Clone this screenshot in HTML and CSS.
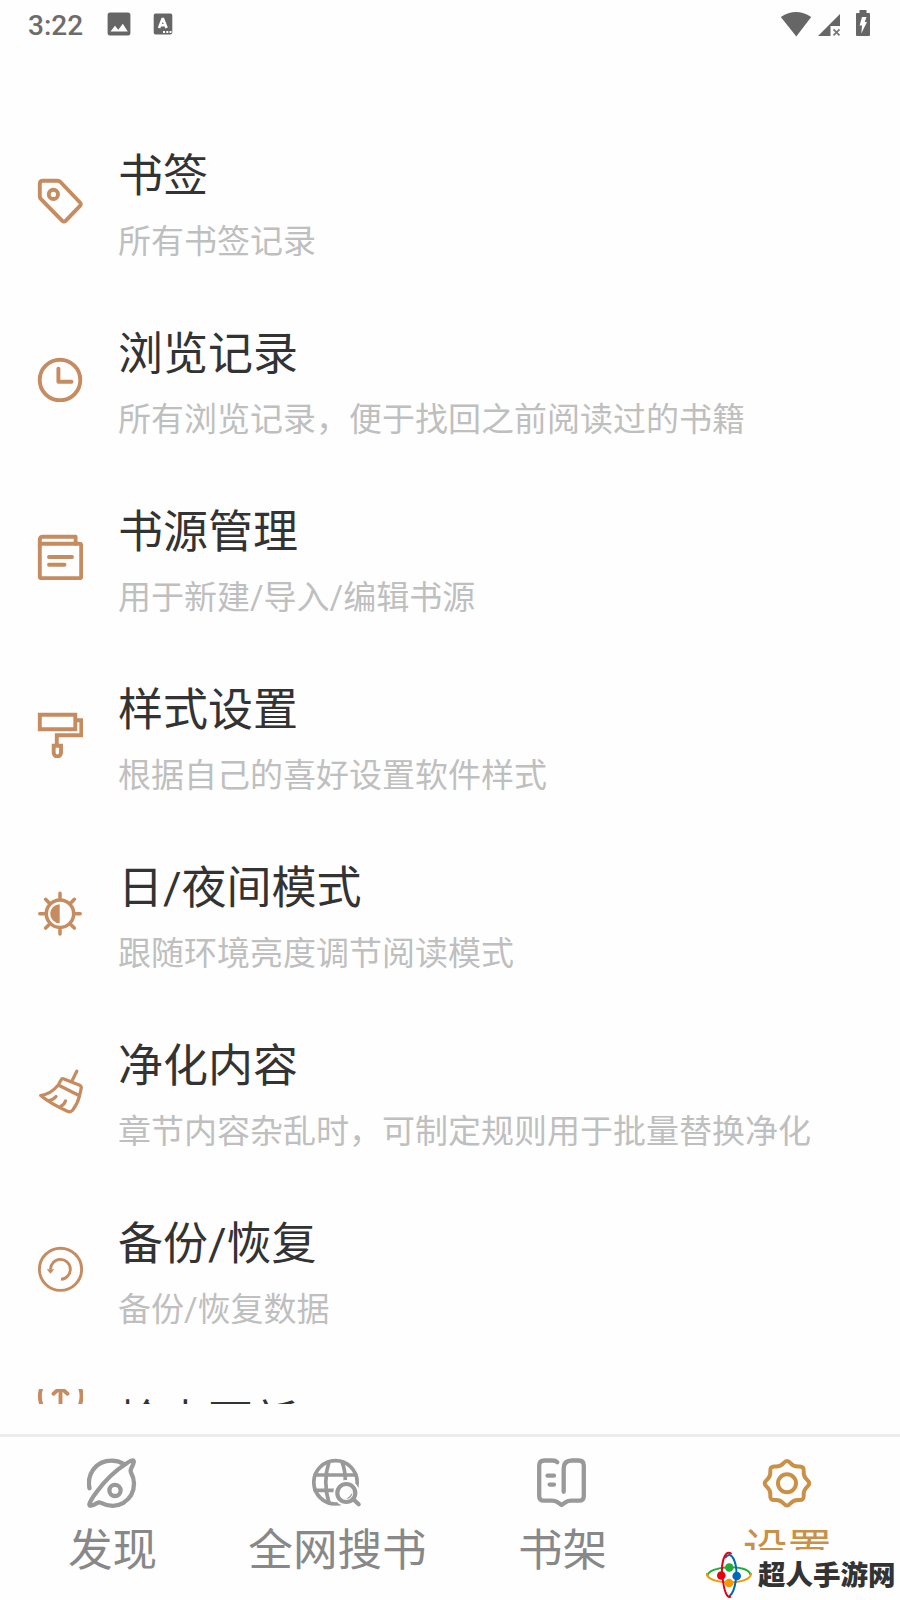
FILE: index.html
```html
<!DOCTYPE html>
<html lang="zh-CN">
<head>
	<meta charset="UTF-8">
	<meta name="viewport" content="width=device-width, initial-scale=1.0">
	<title>设置</title>
	<link rel="stylesheet" href="styles.css">
</head>
<body>
	<div class="status">
		<span class="time">3:22</span>
		<svg class="photo" width="24" height="24" viewBox="0 0 24 24">
			<rect x=".6" y=".6" width="22.8" height="22.8" rx="2.5"/>
			<path class="cut" d="M3.500 19.500l4.500-5.800 3.300 4 4.500-6 5 7.800z"/>
		</svg>
		<svg class="lang" width="20" height="22" viewBox="0 0 20 22">
			<rect x=".7" y=".5" width="18.6" height="21" rx="2"/>
			<path class="cut-line" d="M6 15l3.500-9h.6l3.500 9M7.300 12.300h5"/>
			<path class="cut" d="M10 18h2v2h-2zM13.300 18h2v2h-2zM16.500 18h2v2h-2z"/>
		</svg>
		<div class="signals">
			<svg width="32" height="26" viewBox="0 0 32 26"><path d="M.8 6Q16-4.200 31.200 6L16.300 25.500z"/></svg>
			<svg class="cell" width="24" height="24" viewBox="0 0 24 24">
				<path d="M23 1v12h-9.500v10H1z"/>
				<path class="cross" d="M16.500 16.300l6 6M22.500 16.300l-6 6"/>
			</svg>
			<svg class="battery" width="14" height="26" viewBox="0 0 14 26">
				<path d="M3.500 0h7v3H13q1 0 1 1v21q0 1-1 1H1q-1 0-1-1V4q0-1 1-1h2.500z"/>
				<path class="cut" d="M6 7h4.500L8.800 12H11L5.300 23.500 6 15.500H3.600z"/>
			</svg>
		</div>
	</div>

	<div class="list">
		<div class="item">
			<svg class="icon" viewBox="0 0 46 46">
				<path d="M6 2.800h14.500q1.800 0 3 1.200L43 24.500q1.700 1.800 0 3.400L28.600 42.800q-1.700 1.700-3.300 0L4 21.200q-1.200-1.200-1.200-3V6q0-3.200 3.200-3.200z"/>
				<circle cx="16.400" cy="16.400" r="4.600"/>
			</svg>
			<div>
				<h2>书签</h2>
				<p>所有书签记录</p>
			</div>
		</div>
		<div class="item">
			<svg class="icon" viewBox="0 0 46 46">
				<circle cx="23" cy="24" r="20.300"/>
				<path d="M21.400 12.600v13.100h13.100"/>
			</svg>
			<div>
				<h2>浏览记录</h2>
				<p>所有浏览记录，便于找回之前阅读过的书籍</p>
			</div>
		</div>
		<div class="item">
			<svg class="icon" viewBox="0 0 46 46">
				<rect x="2.800" y="9.700" width="41.400" height="34.500" rx="1.500"/>
				<path d="M2.800 12V6q0-3.200 3.200-3.200h32.600v6.900M12 23h23M12 30.700h15.500"/>
			</svg>
			<div>
				<h2>书源管理</h2>
				<p>用于新建/导入/编辑书源</p>
			</div>
		</div>
		<div class="item">
			<svg class="icon sharp" viewBox="0 0 46 46">
				<path d="M2.800 2.800h35.500v14.500H2.800zM40 8.300h4.300v15H19.800V33M16.700 33.800h7.300v7a3.650 3.650 0 0 1-7.300 0z"/>
			</svg>
			<div>
				<h2>样式设置</h2>
				<p>根据自己的喜好设置软件样式</p>
			</div>
		</div>
		<div class="item">
			<svg class="icon sun" viewBox="0 0 46 46">
				<circle cx="23" cy="23.700" r="13.700"/>
				<path d="M23 8V3.300M23 39.500v4.600M7.500 23.700H2.800M38.500 23.700h4.700M12 12.700L8.600 9.300M34 12.700l3.400-3.400M12 34.700l-3.400 3.400M34 34.700l3.400 3.400"/>
				<path class="fill" d="M22.700 14.300a9.500 9.500 0 0 0 0 19z"/>
			</svg>
			<div>
				<h2>日/夜间模式</h2>
				<p>跟随环境亮度调节阅读模式</p>
			</div>
		</div>
		<div class="item">
			<svg class="icon broom" viewBox="0 0 46 46">
				<path d="M39.800 3.200L35.200 12.500M21.300 17l2.700-5q1-2 3-1l15.700 6.300q2 .8 1.500 3L42.500 28q-2 8-7 14.300-2 2.300-5 1Q14 36 3.700 27.500 14 26 21.300 17zM21.300 17L42 27.500M11.700 32.500q4.500-.5 7.300-4M23.500 38.500q3.500-1.500 5-5.500"/>
			</svg>
			<div>
				<h2>净化内容</h2>
				<p>章节内容杂乱时，可制定规则用于批量替换净化</p>
			</div>
		</div>
		<div class="item">
			<svg class="icon thin" viewBox="0 0 46 46">
				<circle cx="23.500" cy="23.300" r="21.100"/>
				<path d="M24 33.200A9.900 9.900 0 1 0 13.500 23.500"/>
				<path class="fill" d="M9.800 23.300h7.500l-3.900 4.400z"/>
			</svg>
			<div>
				<h2>备份/恢复</h2>
				<p>备份/恢复数据</p>
			</div>
		</div>
		<div class="item last">
			<svg class="icon" viewBox="0 0 46 15">
				<path d="M4.300-1Q1.300 7.500 4.500 16M43.100-1q3 8.500-.2 17M23.500 0v17M16.500 4.800l7-6.300 7 6.300"/>
			</svg>
			<div>
				<h2>检查更新</h2>
			</div>
		</div>
	</div>

	<div class="nav">
		<div class="tab">
			<svg viewBox="0 0 50 50">
				<path d="M2.500 30.200C-.5 16 9 2.600 24.700 2.600q6.300 0 12 3.200M38 6.500Q23 16 10 33.500 3.500 42 2.400 46q-.3 2 1.600 1.600 3-.6 6-2.500 2-1.300 4-.3 12 6 22.500 0Q47 38 47 25.500q0-5.500-3-11-.8-1.800.2-4 2.200-4 2.600-6.500.2-2-1.800-1.500Q42.500 3 38 6.500z"/>
				<circle cx="28" cy="32.400" r="5.600"/>
			</svg>
			<span>发现</span>
		</div>
		<div class="tab">
			<svg class="globe" viewBox="0 0 50 50">
				<circle cx="23.500" cy="24.300" r="21.700"/>
				<path d="M3 17h41M3 32.300h22M17 4q-6.500 20 0 41M30 4q3.500 8.500 3.300 20"/>
				<circle class="halo" cx="34.300" cy="35" r="9.500"/>
				<circle class="lens" cx="34.300" cy="35" r="9"/>
				<path class="lens" d="M41 41l5.700 5.300"/>
			</svg>
			<span>全网搜书</span>
		</div>
		<div class="tab">
			<svg viewBox="0 0 50 50">
				<path d="M20.300 4.300Q18.500 2.500 15.500 2.500H7.500Q2.200 2.500 2.200 7.500V38q0 4.700 4.800 4.700h7.500q4 0 6.500 1.800l3.600 2.500 3.600-2.500q2.500-1.800 6.500-1.800H42q4.800 0 4.800-4.700V7.500q0-5-5.300-5h-6.500q-8.300 0-8.300 8v23.300M10.500 17.700h6.500M12.600 26.600H17"/>
			</svg>
			<span>书架</span>
		</div>
		<div class="tab active">
			<svg viewBox="-25 -25.300 50 50">
				<circle cx="0" cy="0" r="9"/>
				<path d="M20.280 3.370Q16.260 6.730 16.730 11.970Q17.200 17.200 11.970 16.730Q6.730 16.260 3.370 20.280Q0 24.300-3.370 20.280Q-6.730 16.260-11.970 16.730Q-17.200 17.200-16.730 11.970Q-16.260 6.730-20.280 3.370Q-24.300 0-20.280-3.370Q-16.260-6.730-16.730-11.970Q-17.200-17.200-11.970-16.730Q-6.730-16.260-3.370-20.280Q0-24.300 3.370-20.280Q6.730-16.260 11.970-16.730Q17.200-17.200 16.730-11.970Q16.260-6.730 20.280-3.370Q24.300 0 20.280 3.370z"/>
			</svg>
			<span>设置</span>
		</div>
	</div>

	<div class="mark">
		<svg width="46" height="48" viewBox="0 0 46 48">
			<g class="orbit">
				<path class="green" d="M1.500 25C1 15 43 12 44.500 24"/>
				<path class="orange" d="M1 22C-1 34 46 35 45 22"/>
				<path class="blue" d="M19 7C26-3 32 14 30 28 29 36 27 43 23 45.500"/>
				<path class="red" d="M25.500 3C18-3 14 15 17 30 18.500 42 22 48 25 45.500"/>
			</g>
			<circle class="g" cx="23.300" cy="16.500" r="4.300"/>
			<circle class="r" cx="15.300" cy="24.500" r="4.300"/>
			<circle class="b" cx="30.700" cy="25" r="4.300"/>
			<circle class="o" cx="23" cy="32" r="4.300"/>
		</svg>
		<span>超人手游网</span>
	</div>
</body>
</html>
```
FILE: styles.css
```css
*{
	margin: 0;
	padding: 0;
	box-sizing: border-box;
}
body{
	width: 900px;
	height: 1600px;
	overflow: hidden;
	background: #fefefe;
	font-family: Roboto, "Noto Sans CJK SC", sans-serif;
	display: flex;
	flex-flow: column;
}
svg{
	display: block;
	flex: none;
}
/* status bar */
.status{
	height: 48px;
	padding: 0 30px 0 28px;
	display: flex;
	align-items: center;
	fill: #666;
}
.time{
	font: 500 28px Roboto, sans-serif;
	color: #6c6c6c;
	width: 79px;
	padding-top: 2px;
}
.lang{
	margin-left: 22px;
}
.cut{
	fill: #fefefe;
}
.cut-line{
	fill: none;
	stroke: #fefefe;
	stroke-width: 2.6;
}
.cross{
	stroke: #777;
	stroke-width: 1.8;
}
.signals{
	margin-left: auto;
	display: flex;
	align-items: center;
}
.cell{
	margin: 2px 15px 0 5px;
}
.battery{
	margin-top: -2px;
}
/* list */
.list{
	height: 1292px;
	margin-top: 64px;
	overflow: hidden;
	flex: none;
}
.item{
	height: 178px;
	padding: 29px 0 0 37px;
	display: flex;
	gap: 35px;
}
.icon{
	width: 46px;
	height: 46px;
	margin-top: 37px;
	fill: none;
	stroke: #c68c60;
	stroke-width: 3.9;
	stroke-linecap: round;
	stroke-linejoin: round;
}
.sharp{
	stroke-linecap: butt;
	stroke-linejoin: miter;
}
.sun{
	stroke-width: 3.5;
}
.broom{
	stroke-width: 3.2;
}
.thin{
	stroke-width: 2.9;
	stroke-linecap: butt;
}
.fill{
	fill: #c68c60;
	stroke: none;
}
.last .icon{
	height: 15px;
	margin-top: 2px;
}
.item h2{
	font-size: 45px;
	font-weight: 400;
	line-height: 60px;
	padding-top: 6px;
	color: #333;
}
.item p{
	margin-top: 13px;
	font-size: 33px;
	line-height: 44px;
	color: #bfbfbf;
}
/* bottom nav */
.nav{
	margin-top: 30px;
	height: 166px;
	border-top: 3px solid #ececec;
	display: flex;
	flex: none;
}
.tab{
	width: 225px;
	padding-top: 21px;
	display: flex;
	flex-flow: column;
	align-items: center;
	gap: 13px;
	font-size: 44.6px;
	line-height: 60px;
	color: #888;
}
.tab svg{
	width: 50px;
	height: 50px;
	margin-right: 1px;
	fill: none;
	stroke: #999;
	stroke-width: 4.3;
	stroke-linecap: round;
	stroke-linejoin: round;
}
.tab .globe{
	stroke-width: 3.7;
}
.globe .halo{
	stroke: #fefefe;
	stroke-width: 7;
}
.globe .lens{
	stroke-width: 4.2;
}
.tab.active{
	color: #c99046;
}
.tab.active svg{
	stroke: #c99046;
	stroke-width: 4;
}
/* site mark over the corner */
.mark{
	position: absolute;
	left: 700px;
	top: 1550px;
	width: 200px;
	height: 50px;
	padding: 0 0 1px 6px;
	background: #fefefe;
	display: flex;
	align-items: center;
	gap: 6px;
	font-family: "Noto Sans CJK SC", sans-serif;
	font-size: 27.5px;
	font-weight: 900;
	line-height: 46px;
	color: #333;
	white-space: nowrap;
}
.mark span{
	margin-top: -3px;
}
.orbit{
	fill: none;
	stroke-width: 2;
}
.green{ stroke: #22ac38; }
.orange{ stroke: #f39800; }
.blue{ stroke: #0068b7; }
.red{ stroke: #e60012; }
.g{ fill: #22ac38; }
.o{ fill: #f39800; }
.b{ fill: #0068b7; }
.r{ fill: #e60012; }
```
